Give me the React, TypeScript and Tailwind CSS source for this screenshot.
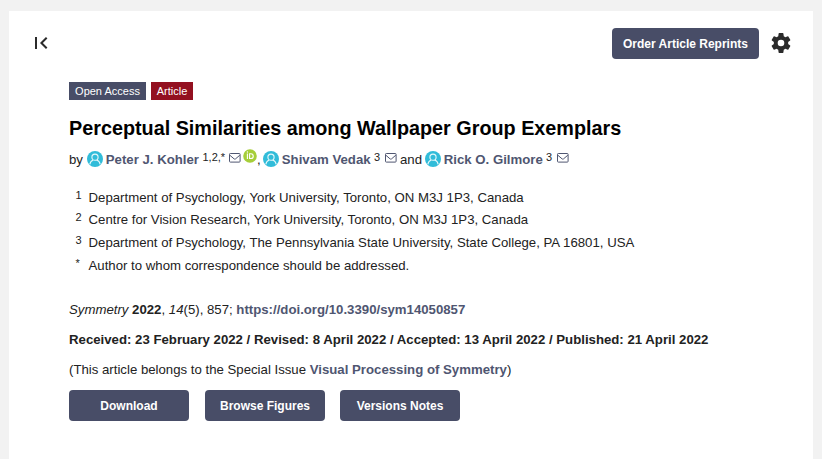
import React from "react";

const Avatar = () => (
  <svg viewBox="0 0 16 16" className="mb-[2px] h-4 w-4 shrink-0">
    <circle cx="8" cy="8" r="8" fill="#31bcd9" />
    <circle cx="8" cy="6.2" r="3.1" fill="none" stroke="#e6f8fb" strokeWidth="1.1" />
    <path d="M2.8 13.4C3.2 11 4.4 9.6 6.2 8.9M13.2 13.4C12.8 11 11.6 9.6 9.8 8.9" fill="none" stroke="#e6f8fb" strokeWidth="1.1" />
  </svg>
);

const Mail = () => (
  <svg viewBox="0 0 12 10" className="mb-1 h-[10px] w-3 shrink-0" fill="none" stroke="#4f5671" strokeWidth="1">
    <rect x="0.5" y="0.5" width="10.6" height="8.6" rx="0.8" />
    <path d="M0.8 2.2L5.1 5.9Q5.8 6.4 6.5 5.9L10.8 2.2" />
  </svg>
);

const Orcid = () => (
  <svg viewBox="0 0 14 14" className="mb-[8px] h-[14px] w-[14px] shrink-0">
    <circle cx="7" cy="7" r="6.8" fill="#a6ce39" />
    <path d="M4.4 4.4V10M6.6 4.8V9.5H7.9A2.35 2.35 0 0 0 7.9 4.8Z" fill="none" stroke="#fff" strokeWidth="1.1" />
    <circle cx="4.4" cy="3" r="0.65" fill="#fff" />
  </svg>
);

const Author = ({ name, mark, nameWidth, markWidth }: { name: string; mark: string; nameWidth: string; markWidth: string }) => (
  <>
    <Avatar />
    <b className={`ml-[2.8px] shrink-0 text-[#4f5671] ${nameWidth}`}>{name}</b>
    <span className={`mb-[5px] shrink-0 text-[11px] ${markWidth}`}>{mark}</span>
    <Mail />
  </>
);

const affiliations = [
  ["1", "Department of Psychology, York University, Toronto, ON M3J 1P3, Canada"],
  ["2", "Centre for Vision Research, York University, Toronto, ON M3J 1P3, Canada"],
  ["3", "Department of Psychology, The Pennsylvania State University, State College, PA 16801, USA"],
  ["*", "Author to whom correspondence should be addressed."],
];

export default function App() {
  return (
    <div className="h-[459px] w-[822px] overflow-hidden bg-[#f2f2f2] pt-[11px] pr-[9px] pl-[9px] font-['Liberation_Sans',Arial,sans-serif] text-[13.21px] text-[#222]">
      <main className="h-[448px] bg-white">
        <header className="flex h-[71px] items-start justify-between pt-[17px] pr-[22px] pl-[26px]">
          <svg viewBox="0 0 13 12" className="mt-[9px] h-3 w-[13px]" fill="none" stroke="#2b2b2b" strokeWidth="2">
            <path d="M1 0V12M11.7 0.7L6.4 6L11.7 11.3" />
          </svg>
          <div className="flex gap-[12px]">
            <button className="h-[31px] w-[147px] rounded-[4px] bg-[#484d67] text-[12px] font-bold whitespace-nowrap text-white">Order Article Reprints</button>
            <svg viewBox="2 2 20 20" className="mt-[5px] h-5 w-5" fill="#2b2b2b">
              <path d="M19.14 12.94c.04-.3.06-.61.06-.94 0-.32-.02-.64-.07-.94l2.03-1.58a.49.49 0 0 0 .12-.61l-1.92-3.32a.49.49 0 0 0-.59-.22l-2.39.96a7.03 7.03 0 0 0-1.62-.94L14.4 2.51a.48.48 0 0 0-.48-.41h-3.84a.47.47 0 0 0-.47.41l-.36 2.84c-.59.24-1.13.57-1.62.94l-2.39-.96a.48.48 0 0 0-.59.22L2.74 8.87a.48.48 0 0 0 .12.61l2.03 1.58c-.05.3-.09.63-.09.94s.02.64.07.94l-2.03 1.58a.49.49 0 0 0-.12.61l1.92 3.32c.12.22.37.29.59.22l2.39-.96c.5.38 1.03.7 1.62.94l.36 2.84c.05.24.24.41.48.41h3.84c.24 0 .44-.17.47-.41l.36-2.84a7.03 7.03 0 0 0 1.62-.94l2.39.96c.22.08.47 0 .59-.22l1.92-3.32a.48.48 0 0 0-.12-.61l-2.01-1.58zM12 15.3A3.3 3.3 0 1 1 12 8.7a3.3 3.3 0 0 1 0 6.6z" />
            </svg>
          </div>
        </header>

        <section className="pl-[60px] whitespace-nowrap">
          <div className="flex gap-[5px] text-[11px] leading-[18px] text-white">
            <span className="h-[18px] w-[77px] bg-[#484d67] text-center">Open Access</span>
            <span className="h-[18px] w-[42px] bg-[#931020] text-center">Article</span>
          </div>
          <h1 className="mt-[16px] text-[19.8px] leading-6 font-bold text-black">Perceptual Similarities among Wallpaper Group Exemplars</h1>

          <div className="mt-[9px] flex h-[21px] items-center leading-[19px]">
            <span className="w-[18px] shrink-0">by</span>
            <Author name="Peter J. Kohler" mark="1,2,*" nameWidth="w-[96.7px]" markWidth="w-[26.5px]" />
            <span className="w-[2px] shrink-0" />
            <Orcid />
            <span className="w-[6px] shrink-0">,</span>
            <Author name="Shivam Vedak" mark="3" nameWidth="w-[92.2px]" markWidth="w-[11px]" />
            <span className="ml-[3px] w-[25px] shrink-0">and</span>
            <Author name="Rick O. Gilmore" mark="3" nameWidth="w-[102.2px]" markWidth="w-[11px]" />
          </div>

          <ul className="mt-[17px]">
            {affiliations.map(([mark, text]) => (
              <li key={mark} className="flex h-[22.6px] items-start leading-[22px] nth-2:-mt-px nth-2:mb-px">
                <span className="-mt-[3px] ml-[6.5px] w-[13px] text-[11px]">{mark}</span>
                <span>{text}</span>
              </li>
            ))}
          </ul>

          <p className="mt-[22.6px] leading-5"><i>Symmetry</i> <b>2022</b>, <i>14</i>(5), 857; <b className="text-[#4f5671]">https://doi.org/10.3390/sym14050857</b></p>
          <p className="mt-[10px] leading-5 font-bold">Received: 23 February 2022 / Revised: 8 April 2022 / Accepted: 13 April 2022 / Published: 21 April 2022</p>
          <p className="mt-[10px] leading-5">(This article belongs to the Special Issue <b className="text-[#4f5671]">Visual Processing of Symmetry</b>)</p>

          <div className="mt-[10px] flex text-[12px] font-bold text-white">
            <button className="mr-4 h-[31px] w-[120px] rounded-[4px] bg-[#484d67] pt-px">Download</button>
            <button className="mr-[15px] h-[31px] w-[120px] rounded-[4px] bg-[#484d67] pt-px">Browse Figures</button>
            <button className="h-[31px] w-[120px] rounded-[4px] bg-[#484d67] pt-px">Versions Notes</button>
          </div>
        </section>
      </main>
    </div>
  );
}
